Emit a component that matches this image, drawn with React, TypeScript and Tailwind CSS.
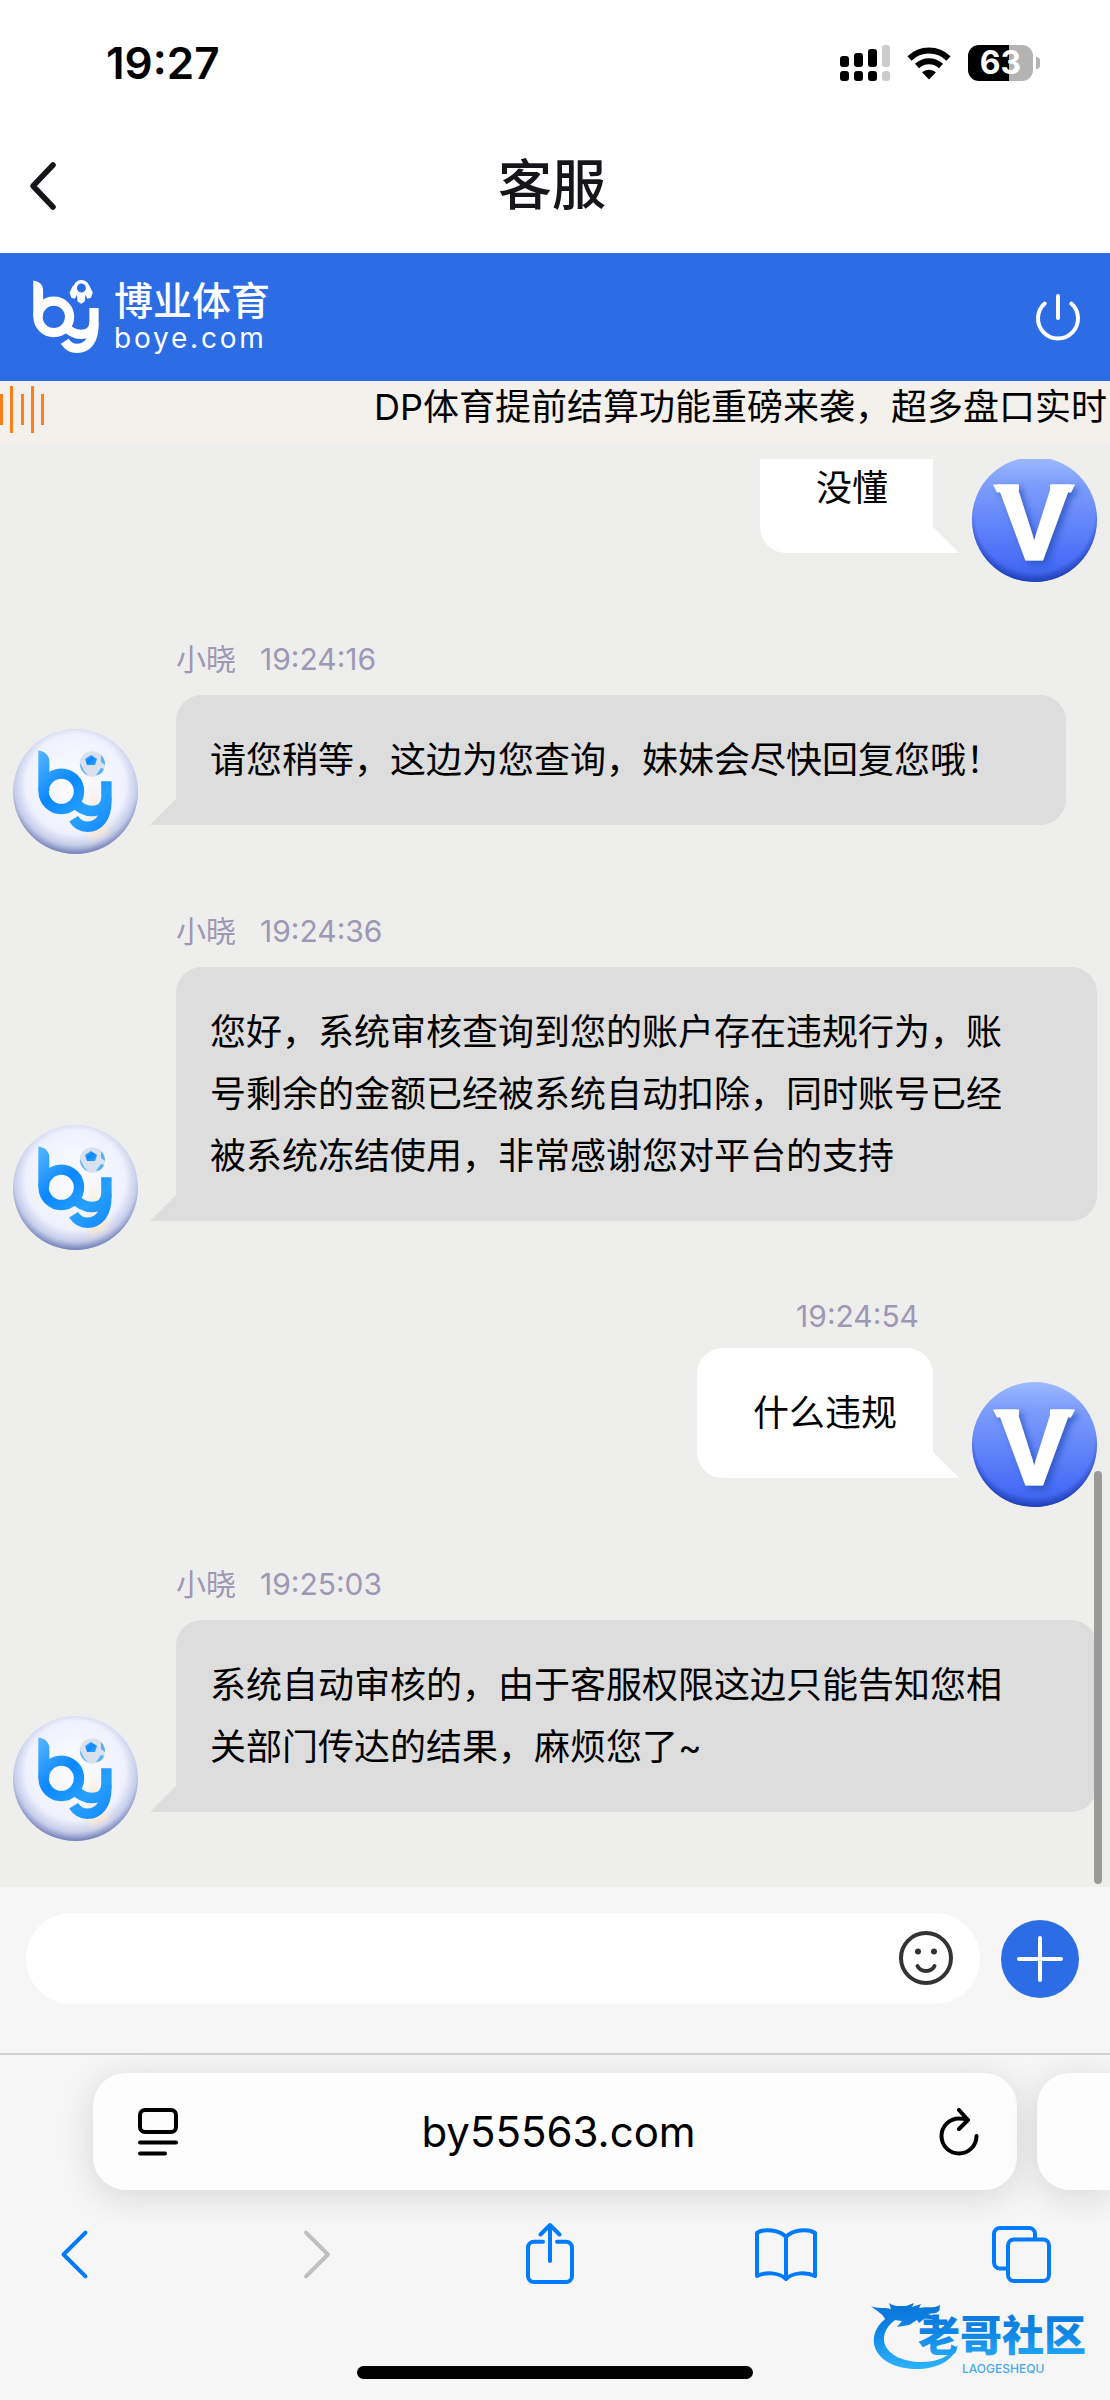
import React from 'react'

interface Message {
    id: number
    side: 'left' | 'right'
    name?: string
    time?: string
    text: string
}

const messages: Message[] = [
    { id: 1, side: 'right', text: '没懂' },
    { id: 2, side: 'left', name: '小晓', time: '19:24:16', text: '请您稍等，这边为您查询，妹妹会尽快回复您哦！' },
    {
        id: 3,
        side: 'left',
        name: '小晓',
        time: '19:24:36',
        text: '您好，系统审核查询到您的账户存在违规行为，账号剩余的金额已经被系统自动扣除，同时账号已经被系统冻结使用，非常感谢您对平台的支持',
    },
    { id: 4, side: 'right', time: '19:24:54', text: '什么违规' },
    {
        id: 5,
        side: 'left',
        name: '小晓',
        time: '19:25:03',
        text: '系统自动审核的，由于客服权限这边只能告知您相关部门传达的结果，麻烦您了~',
    },
]

const StatusBar = () => (
    <div className="flex h-[126px] shrink-0 items-center justify-between pr-[70px] pl-[106px]">
        <span className="text-[44px] leading-none font-semibold text-black">19:27</span>
        <div className="flex items-center gap-[17px]">
            <svg className="h-9 w-[50px]" viewBox="0 0 50 36">
                <g fill="#000">
                    <rect x="0" y="11" width="9" height="11" rx="3" />
                    <rect x="14" y="8" width="9" height="14" rx="3" />
                    <rect x="28" y="4" width="9" height="18" rx="3" />
                    <rect x="0" y="26" width="9" height="10" rx="3" />
                    <rect x="14" y="26" width="9" height="10" rx="3" />
                    <rect x="28" y="26" width="9" height="10" rx="3" />
                </g>
                <g fill="#ccc">
                    <rect x="42" y="0" width="8" height="22" rx="3" />
                    <rect x="42" y="26" width="8" height="10" rx="3" />
                </g>
            </svg>
            <svg className="h-[34px] w-11" viewBox="0 0 44 34">
                <g fill="none" stroke="#000" strokeWidth="6">
                    <path d="M2.5 12.5a28 28 0 0 1 39 0" />
                    <path d="M10 20a17.500 17.500 0 0 1 24 0" />
                </g>
                <path d="M22 33.500 15 26.300a10.500 10.500 0 0 1 14 0Z" />
            </svg>
            <div className="flex items-center gap-[3px]">
                <div className="flex h-9 w-[65px] items-center justify-center rounded-[11px] bg-linear-to-r from-black from-63% to-[#b3b3b3] to-63%">
                    <span className="text-[32px] leading-none font-bold text-white">63</span>
                </div>
                <div className="h-3 w-1 rounded-r-full bg-[#b3b3b3]" />
            </div>
        </div>
    </div>
)

const TitleBar = () => (
    <div className="grid h-[127px] shrink-0 grid-cols-[1fr_auto_1fr] items-center pr-1.5 pb-2">
        <button aria-label="返回" className="flex w-20 items-center pl-7">
            <svg className="h-[50px] w-8" viewBox="0 0 32 50" fill="none" stroke="#15151a" strokeWidth="5.500" strokeLinecap="round" strokeLinejoin="round">
                <path d="M25 4 5 25l20 21" />
            </svg>
        </button>
        <h1 className="text-[54px] leading-none font-medium text-[#15151a]">客服</h1>
    </div>
)

// Strokes of the brand mark, shared by the header logo and the agent avatar
const MarkStrokes = ({ color }: { color: string }) => (
    <>
        <path d="M25.300 21.600c7 1 11 5 11 11V62h-11Z" fill={color} />
        <g fill="none" stroke={color} strokeWidth="10.400">
            <circle cx="48.300" cy="62.300" r="17.700" />
            <path d="M60 72c6 7 12 10 19 10 8 0 14-5 14.400-13" />
            <path d="M93.400 52.300V72c0 17-8 25.700-19 25.700-6 0-10.500-2.700-13.800-8" />
        </g>
    </>
)

const Logo = () => (
    <a href="#" className="flex items-center gap-3.5 text-white">
        <svg className="h-[74px] w-[68px]" viewBox="24 21 76 83">
            <MarkStrokes color="#fff" />
            <circle cx="79.300" cy="30" r="7" fill="none" stroke="#fff" strokeWidth="4" />
            <path d="m70 27-4 8 2 6 4 1 3-6ZM88 27l4 8-2 6-4 1-3-6ZM74 36h10l-1 9-4 2.500-4-2.500Z" fill="#fff" />
        </svg>
        <span className="flex flex-col">
            <span className="text-[39px] leading-[42px] font-medium">博业体育</span>
            <span className="text-[28px] leading-8 tracking-widest">boye.com</span>
        </span>
    </a>
)

const BrandHeader = () => (
    <header className="flex h-32 shrink-0 items-center justify-between bg-[#2c6de5] pr-[26px] pl-8">
        <Logo />
        <button aria-label="退出">
            <svg className="size-[52px]" viewBox="0 0 52 52" fill="none" stroke="#fff" strokeWidth="4" strokeLinecap="round">
                <path d="M26 5v22M12.700 12.500a20 20 0 1 0 26.600 0" />
            </svg>
        </button>
    </header>
)

const Notice = () => (
    <div className="flex h-[62px] shrink-0 items-start overflow-hidden bg-[#f4f0eb]">
        <svg className="mt-1 h-12 w-[374px] shrink-0" viewBox="0 0 374 48" fill="#ff7f1a">
            <rect x="0" y="9" width="3" height="31" />
            <rect x="10" y="1" width="3" height="47" />
            <rect x="21" y="9" width="3" height="31" />
            <rect x="31" y="1" width="3" height="47" />
            <rect x="41" y="9" width="3" height="31" />
        </svg>
        <p className="text-4xl leading-[52px] whitespace-nowrap text-black">DP体育提前结算功能重磅来袭，超多盘口实时</p>
    </div>
)

const AgentAvatar = () => (
    <svg className="size-[125px] shrink-0" viewBox="0 0 125 125">
        <defs>
            <radialGradient id="pearl" cx="50%" cy="44%" r="57%">
                <stop offset="0" stopColor="#fdfdff" />
                <stop offset=".7" stopColor="#eff1fd" />
                <stop offset=".86" stopColor="#c6cdea" />
                <stop offset="1" stopColor="#6673b0" />
            </radialGradient>
            <linearGradient id="ink" x1="0" y1="0" x2="1" y2="1">
                <stop offset="0" stopColor="#58b6ff" />
                <stop offset=".45" stopColor="#0a88ff" />
                <stop offset="1" stopColor="#38a4ff" />
            </linearGradient>
            <linearGradient id="inkFlat" gradientUnits="userSpaceOnUse" x1="25" y1="22" x2="95" y2="104">
                <stop offset="0" stopColor="#58b6ff" />
                <stop offset=".4" stopColor="#0a88ff" />
                <stop offset=".7" stopColor="#26a0ff" />
                <stop offset="1" stopColor="#1488ff" />
            </linearGradient>
            <filter id="glow" x="-30%" y="-30%" width="160%" height="160%">
                <feGaussianBlur stdDeviation="3" />
            </filter>
        </defs>
        <circle cx="62.500" cy="62.500" r="62.500" fill="url(#pearl)" />
        <path d="M78 56 96 104 76 112Z" fill="#fde9cf" opacity=".8" filter="url(#glow)" />
        <MarkStrokes color="url(#inkFlat)" />
        <circle cx="79.300" cy="35" r="12.700" fill="#d9e0ee" />
        <path d="m78 26 6 4-2 6h-8l-2-6Z" fill="url(#ink)" />
        <path d="M88 26c3 3 4 6 4 10l-4-3ZM67 34l4 8 4 4c-5-2-8-6-8-12ZM83 46l5-7 3 1c-1 3-4 6-8 6Z" fill="#55b0ff" />
    </svg>
)

const MemberAvatar = () => (
    <svg className="size-[125px] shrink-0" viewBox="0 0 125 125">
        <defs>
            <linearGradient id="disc" x1="0" y1="0" x2="0" y2="1">
                <stop offset="0" stopColor="#9dbaff" />
                <stop offset=".2" stopColor="#7f9ffc" />
                <stop offset=".85" stopColor="#476cf6" />
                <stop offset="1" stopColor="#3a5fe6" />
            </linearGradient>
            <radialGradient id="rim" cx="50%" cy="44%" r="56%">
                <stop offset=".86" stopColor="#1c3bb0" stopOpacity="0" />
                <stop offset="1" stopColor="#1c3bb0" stopOpacity=".9" />
            </radialGradient>
            <filter id="drop" x="-20%" y="-20%" width="150%" height="150%">
                <feDropShadow dx="4" dy="4" stdDeviation="3" floodColor="#2150b8" floodOpacity=".7" />
            </filter>
        </defs>
        <circle cx="62.500" cy="62.500" r="62.500" fill="url(#disc)" />
        <circle cx="62.500" cy="62.500" r="62.500" fill="url(#rim)" />
        <g fill="#fff" filter="url(#drop)">
            <text x="62" y="102" textAnchor="middle" fontFamily="Liberation Sans, sans-serif" fontWeight="700" fontSize="106" stroke="#fff" strokeWidth="3">V</text>
            <path d="M21 27.500h26v6l-22 2ZM78 27.500h25l-4 8-21-2Z" />
        </g>
    </svg>
)

const AgentMessage = ({ message }: { message: Message }) => (
    <li className="flex shrink-0 items-end gap-[38px] pt-[57px] pr-[13px] pl-[13px]">
        <AgentAvatar />
        <div className="mb-[29px] flex min-w-0 flex-col items-start">
            <div className="mb-4 flex gap-6 text-[30px] leading-10 text-[#9d98b5]">
                <span>{message.name}</span>
                <time>{message.time}</time>
            </div>
            <div className="relative rounded-[26px] rounded-bl-none bg-[#ddd] py-[34px] pr-16 pl-[34px] text-4xl leading-[62px] text-black">
                {message.text}
                <svg className="absolute right-full bottom-0 size-[26px]" viewBox="0 0 26 26" fill="#ddd">
                    <path d="M26 0v26H0Z" />
                </svg>
            </div>
        </div>
    </li>
)

const MemberMessage = ({ message }: { message: Message }) => (
    <li className="flex shrink-0 items-end justify-end gap-[39px] pt-[46px] pr-[13px]">
        <div className="mb-[29px] flex flex-col items-end">
            {message.time && <time className="mr-3.5 mb-3 text-[30px] leading-10 text-[#9d98b5]">{message.time}</time>}
            <div className="relative min-w-[173px] rounded-[26px] rounded-br-none bg-white py-[34px] pr-9 pl-14 text-4xl leading-[62px] text-black">
                {message.text}
                <svg className="absolute bottom-0 left-full size-[26px]" viewBox="0 0 26 26" fill="#fff">
                    <path d="M0 0v26h26Z" />
                </svg>
            </div>
        </div>
        <MemberAvatar />
    </li>
)

const Conversation = () => (
    <main className="relative flex min-h-0 flex-1 flex-col bg-[#eeeeec] pt-4">
        <ul className="flex min-h-0 flex-1 flex-col justify-end overflow-hidden pb-[46px]">
            {messages.map((message) =>
                message.side === 'left' ? (
                    <AgentMessage key={message.id} message={message} />
                ) : (
                    <MemberMessage key={message.id} message={message} />
                )
            )}
        </ul>
        <div className="absolute right-2 bottom-[3px] h-[413px] w-2 rounded-full bg-[#9a9a99]" />
    </main>
)

const Composer = () => (
    <form className="flex h-[166px] shrink-0 items-start gap-[21px] bg-[#f6f6f6] pt-[26px] pr-[31px] pl-[26px]">
        <div className="flex h-[91px] flex-1 items-center rounded-full bg-white pr-[26px] pl-10">
            <input aria-label="消息" type="text" className="h-full min-w-0 flex-1 bg-transparent text-4xl outline-none" />
            <button type="button" aria-label="表情">
                <svg className="size-14" viewBox="0 0 56 56" fill="none" stroke="#333" strokeWidth="4" strokeLinecap="round">
                    <circle cx="28" cy="27" r="25" />
                    <path d="M19.500 35c3 6.500 14 6.500 17 0" />
                    <circle cx="20" cy="20.500" r="3" fill="#333" stroke="none" />
                    <circle cx="36" cy="20.500" r="3" fill="#333" stroke="none" />
                </svg>
            </button>
        </div>
        <button type="button" aria-label="更多" className="mt-[7px] flex size-[78px] items-center justify-center rounded-full bg-[#2c6de5]">
            <svg className="size-[46px]" viewBox="0 0 46 46" stroke="#fff" strokeWidth="4" strokeLinecap="round">
                <path d="M23 2v42M2 23h42" />
            </svg>
        </button>
    </form>
)

const AddressBar = () => (
    <div className="flex gap-5 overflow-hidden pt-[18px] pb-8 pl-[93px]">
        <div className="flex h-[117px] flex-1 items-center justify-between rounded-[33px] bg-[#fdfdfd] pr-[38px] pl-[45px] shadow-[0_6px_36px_rgba(0,0,0,0.13)]">
            <button aria-label="页面设置">
                <svg className="h-12 w-10" viewBox="0 0 40 48" fill="none" stroke="#000" strokeWidth="4" strokeLinecap="round">
                    <rect x="2" y="2" width="36" height="22" rx="5" />
                    <path d="M2 34.500h36M2 45.500h25" />
                </svg>
            </button>
            <span className="text-[42px] leading-none text-black">by55563.com</span>
            <button aria-label="刷新">
                <svg className="h-12 w-10" viewBox="0 0 40 48" fill="none" stroke="#000" strokeWidth="4" strokeLinecap="round" strokeLinejoin="round">
                    <path d="M37.500 28A17.500 17.500 0 1 1 20 10.500c3 0 6 .4 9 1.500M20 2l9 10-9 9" />
                </svg>
            </button>
        </div>
        <div className="h-[117px] w-[73px] shrink-0 rounded-l-[33px] bg-[#fdfdfd] shadow-[0_6px_36px_rgba(0,0,0,0.13)]" />
    </div>
)

const navItems = [
    { label: '后退', path: 'M43.500 10.700 21.500 32.500l22 21.800', color: '#007aff' },
    { label: '前进', path: 'm27 10.700 22 21.800L27 54.300', color: '#bfbfbf' },
    {
        label: '共享',
        path: 'M27 19.700H18a6 6 0 0 0-6 6V54a6 6 0 0 0 6 6h32a6 6 0 0 0 6-6V25.700a6 6 0 0 0-6-6H41M34 39V3.500M24.500 12.500 34 3l9.500 9.500',
        color: '#007aff',
    },
    {
        label: '书签',
        path: 'M34 15C28 8 12 6 5 11v43c8-4 22-4 29 3 7-7 21-7 29-3V11C56 6 40 8 34 15ZM34 15v42',
        color: '#007aff',
    },
    {
        label: '标签页',
        path: 'M25 17.500h29a6 6 0 0 1 6 6V53a6 6 0 0 1-6 6H25a6 6 0 0 1-6-6V23.500a6 6 0 0 1 6-6ZM19 46.500h-8a6 6 0 0 1-6-6V12a6 6 0 0 1 6-6h29a6 6 0 0 1 6 6v5',
        color: '#007aff',
    },
]

const BrowserNav = () => (
    <nav className="flex justify-between pr-[57px] pl-[42px]">
        {navItems.map((item) => (
            <button key={item.label} aria-label={item.label}>
                <svg className="size-16 overflow-visible" viewBox="0 0 64 64" fill="none" stroke={item.color} strokeWidth="4" strokeLinecap="round" strokeLinejoin="round">
                    <path d={item.path} />
                </svg>
            </button>
        ))}
    </nav>
)

const CommunityStamp = () => (
    <svg className="absolute right-3 bottom-6 h-20 w-[230px] overflow-visible" viewBox="0 0 230 80">
        <defs>
            <linearGradient id="stamp" gradientUnits="userSpaceOnUse" x1="0" y1="4" x2="0" y2="76">
                <stop offset="0" stopColor="#0a72d8" />
                <stop offset=".45" stopColor="#0f86e6" />
                <stop offset="1" stopColor="#2fb8ff" />
            </linearGradient>
        </defs>
        <g fill="url(#stamp)">
            <path d="M36 14C14 20 4 34 6 48c3 16 22 26 46 25 20-1 34-10 38-24-8 11-20 17-36 17-20 0-36-8-38-21-1-10 6-20 20-26Z" />
            <path d="M3 10c7 3 13 1 20 3l-2-6c5 4 11 3 17 3l8-3-2 4 9-3-2 4c8-2 14 1 21-3-1 6 1 5-4 8l-8 1c4 2 8 1 11 3-5 4-10 1-15 2l-5 4-2-3-8 5-12 2 5-6-8-1-8 1C15 17 8 15 3 10Z" />
            <text x="50" y="55" fontFamily="Noto Sans CJK SC, sans-serif" fontWeight="900" fontSize="42">老哥社区</text>
        </g>
        <text x="94" y="77" fontFamily="Inter, sans-serif" fontWeight="500" fontSize="12" fill="#4aa8ee">LAOGESHEQU</text>
    </svg>
)

const App = () => {
    return (
        <div className="flex h-screen flex-col overflow-hidden bg-white font-[Inter,'Noto_Sans_CJK_SC',sans-serif]">
            <StatusBar />
            <TitleBar />
            <BrandHeader />
            <Notice />
            <Conversation />
            <Composer />
            <footer className="relative shrink-0 border-t-2 border-[#d1d1d1] bg-[#f6f6f6] pb-[21px]">
                <AddressBar />
                <BrowserNav />
                <div className="mx-auto mt-20 h-[13px] w-[396px] rounded-full bg-black" />
                <CommunityStamp />
            </footer>
        </div>
    )
}

export default App
